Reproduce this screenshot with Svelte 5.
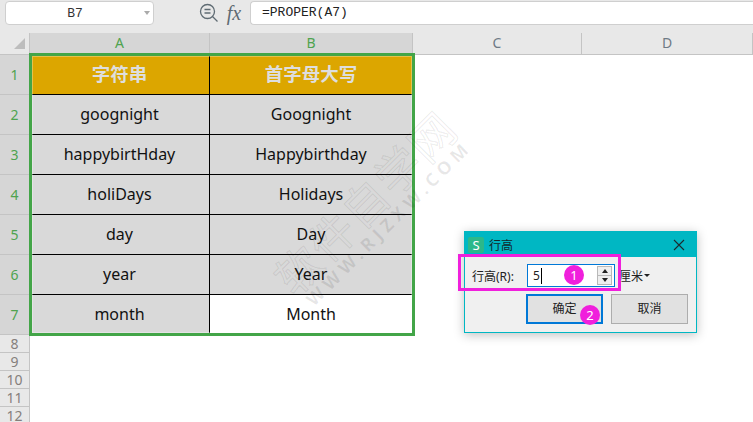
<script>
    const cols = ["A", "B", "C", "D"];
    const rows = [
        ["goognight", "Goognight"],
        ["happybirtHday", "Happybirthday"],
        ["holiDays", "Holidays"],
        ["day", "Day"],
        ["year", "Year"],
        ["month", "Month"],
    ];
    const emptyRows = [8, 9, 10, 11, 12];
</script>

<div class="app">
    <div class="formula-bar">
        <div class="name-box">
            <span>B7</span>
            <i class="name-caret"></i>
        </div>
        <svg class="zoom-icon" width="20" height="20" viewBox="0 0 20 20" fill="none" stroke="#5f6b73" stroke-width="1.3">
            <circle cx="8.5" cy="8.5" r="7" />
            <path d="M5.5 6.5h6M5.5 10h6M13.5 13.5l5 5" />
        </svg>
        <span class="fx">fx</span>
        <div class="formula-input">=PROPER(A7)</div>
    </div>

    <div class="sheet">
        <div class="corner"><i></i></div>
        {#each cols as col, i}
            <div class="col-head" class:active={i < 2}>{col}</div>
        {/each}

        <div class="row-head active">1</div>
        <div class="cell title">字符串</div>
        <div class="cell title">首字母大写</div>
        <div class="blank wide"></div>

        {#each rows as row, i}
            <div class="row-head active">{i + 2}</div>
            <div class="cell">{row[0]}</div>
            <div class="cell" class:white={i == 5}>{row[1]}</div>
            <div class="blank wide"></div>
        {/each}

        {#each emptyRows as n}
            <div class="row-head small">{n}</div>
            <div class="blank full"></div>
        {/each}

        <div class="selection"></div>
    </div>

    <div class="watermark">
        <span class="wm-big">软件自学网</span>
        <span class="wm-small">WWW.RJZXW.COM</span>
    </div>

    <div class="dialog">
        <div class="dialog-title">
            <span class="logo">S</span>
            <span class="dialog-name">行高</span>
            <svg class="close" width="12" height="12" viewBox="0 0 12 12" stroke="#1b2b2e" stroke-width="1.1">
                <path d="M1 1l10 10M11 1L1 11" />
            </svg>
        </div>
        <div class="dialog-body">
            <div class="field-row">
                <span class="field-label">行高(R):</span>
                <div class="field-input">
                    <span class="value">5</span>
                    <div class="spinner">
                        <i class="up"></i>
                        <i class="down"></i>
                    </div>
                </div>
                <span class="unit">厘米</span>
                <i class="unit-caret"></i>
            </div>
            <div class="button-row">
                <div class="btn primary">确定</div>
                <div class="btn">取消</div>
            </div>
        </div>
        <div class="highlight"></div>
        <div class="badge one">1</div>
        <div class="badge two">2</div>
    </div>
</div>

<style>
    :global(body) {
        margin: 0;
        background: #fff;
    }
    * {
        box-sizing: border-box;
    }
    .app {
        position: relative;
        width: 753px;
        height: 422px;
        overflow: hidden;
        font-family: "Noto Sans", "Noto Sans CJK SC", sans-serif;
    }
    .formula-bar {
        display: flex;
        align-items: center;
        height: 33px;
        padding: 1px 0 8px 5px;
        background: #e8e8e8;
    }
    .name-box {
        display: flex;
        align-items: center;
        width: 149px;
        height: 24px;
        background: #fff;
        border: 1px solid #cfcfcf;
        border-radius: 4px;
    }
    .name-box span {
        flex: 1;
        text-align: center;
        font: 13px "Liberation Mono", monospace;
        color: #333;
    }
    .name-caret {
        width: 0;
        height: 0;
        margin-right: 3px;
        border: 3px solid transparent;
        border-top: 4px solid #aaa;
        border-bottom: 0;
    }
    .zoom-icon {
        margin-left: 45px;
    }
    .fx {
        width: 26px;
        margin-left: 2px;
        font: italic 20px "Liberation Serif", serif;
        color: #5f6b73;
        text-align: center;
    }
    .formula-input {
        flex: 1;
        height: 24px;
        margin-left: 3px;
        padding: 3px 0 0 11px;
        background: #fff;
        border: 1px solid #cfcfcf;
        border-right: 0;
        border-radius: 4px 0 0 4px;
        font: 13px "Liberation Mono", monospace;
        color: #222;
    }
    .sheet {
        position: relative;
        display: grid;
        grid-template-columns: 30px 180px 203px 169px 171px;
        grid-template-rows: 22px repeat(7, 40px) repeat(5, 18px);
    }
    .corner {
        position: relative;
        background: #e8e8e8;
        border-right: 1px solid #c4c4c4;
        border-bottom: 1px solid #c4c4c4;
    }
    .corner i {
        position: absolute;
        right: 4px;
        bottom: 5px;
        border-left: 11px solid transparent;
        border-bottom: 11px solid #bdbdbd;
    }
    .col-head {
        background: #e8e8e8;
        border-right: 1px solid #c4c4c4;
        border-bottom: 1px solid #c4c4c4;
        text-align: center;
        font: 14px/20px "Noto Sans", sans-serif;
        color: #6e7a85;
    }
    .col-head.active {
        background: #d6d6d6;
        color: #4fa34f;
    }
    .row-head {
        background: #e8e8e8;
        border-right: 1px solid #c4c4c4;
        border-bottom: 1px solid #c4c4c4;
        text-align: center;
        font: 14px/39px "Noto Sans", sans-serif;
    }
    .row-head.small {
        font-size: 14px;
        line-height: 17px;
        color: #857f7c;
    }
    .row-head.active {
        background: #d6d6d6;
        color: #4fa34f;
    }
    .cell {
        background: #d9d9d9;
        border-right: 1px solid #000;
        border-bottom: 1px solid #000;
        text-align: center;
        font-size: 16px;
        line-height: 38px;
        color: #111;
    }
    .cell.title {
        background: #dca600;
        color: #dedede;
        font-size: 18.5px;
        font-weight: 700;
    }
    .cell.white {
        background: #fff;
    }
    .blank {
        background: #fff;
    }
    .wide {
        grid-column: 4 / span 2;
    }
    .full {
        grid-column: 2 / span 4;
    }
    .selection {
        position: absolute;
        left: 29px;
        top: 20px;
        width: 386px;
        height: 283px;
        border: 3px solid #43a548;
        box-shadow: inset 0 0 0 1px rgba(255, 255, 255, 0.3);
        pointer-events: none;
    }
    .watermark {
        position: absolute;
        left: 373px;
        top: 210px;
        display: flex;
        flex-direction: column;
        align-items: center;
        transform: translate(-50%, -50%) rotate(-45deg);
        color: rgba(0, 0, 0, 0.02);
        -webkit-text-stroke: 1.2px rgba(0, 0, 0, 0.08);
        pointer-events: none;
    }
    .wm-big {
        font-size: 45px;
        line-height: 40px;
        letter-spacing: 2px;
        font-weight: 400;
        white-space: nowrap;
    }
    .wm-small {
        font-size: 18px;
        line-height: 20px;
        font-weight: 700;
        letter-spacing: 5px;
        margin-left: 4px;
        white-space: nowrap;
        color: rgba(0, 0, 0, 0.09);
        -webkit-text-stroke: 0;
    }
    .dialog {
        position: absolute;
        left: 464px;
        top: 231px;
        width: 233px;
        height: 102px;
        background: #f0f0f0;
        border: 1px solid #00b7c3;
        box-shadow: 0 2px 10px rgba(0, 0, 0, 0.25);
        font-size: 12px;
        color: #222;
    }
    .dialog-title {
        display: flex;
        align-items: center;
        height: 25px;
        padding: 0 11px 0 3px;
        background: #00b7c3;
    }
    .logo {
        width: 16px;
        height: 16px;
        background: #2bb88a;
        border-radius: 2px;
        color: #fff;
        text-align: center;
        font: 400 13px/16px "Noto Sans", sans-serif;
    }
    .dialog-name {
        flex: 1;
        margin-left: 5px;
        font-size: 12px;
        color: #12282b;
    }
    .dialog-body {
        padding: 7px 8px 0 7px;
    }
    .field-row {
        display: flex;
        align-items: center;
        height: 23px;
    }
    .field-label {
        width: 55px;
        white-space: nowrap;
    }
    .field-input {
        display: flex;
        align-items: center;
        justify-content: space-between;
        width: 88px;
        height: 23px;
        padding: 0 1px 0 5px;
        background: #fff;
        border: 1px solid #0078d7;
    }
    .value {
        padding-right: 1px;
        border-right: 1px solid #000;
        line-height: 16px;
    }
    .spinner {
        display: flex;
        flex-direction: column;
        width: 15px;
        height: 19px;
        margin-right: 1px;
        background: #efefef;
        border: 1px solid #b9b9b9;
    }
    .spinner i {
        flex: 1;
        display: flex;
        justify-content: center;
        align-items: center;
    }
    .spinner .up::before {
        content: "";
        border: 3px solid transparent;
        border-top: 0;
        border-bottom: 4px solid #222;
    }
    .spinner .down {
        border-top: 1px solid #b9b9b9;
    }
    .spinner .down::before {
        content: "";
        border: 3px solid transparent;
        border-bottom: 0;
        border-top: 4px solid #222;
    }
    .unit {
        margin-left: 4px;
    }
    .unit-caret {
        margin-left: 1px;
        border: 3px solid transparent;
        border-bottom: 0;
        border-top: 3px solid #222;
    }
    .button-row {
        display: flex;
        gap: 8px;
        margin: 7px 0 0 54px;
    }
    .btn {
        width: 77px;
        height: 30px;
        background: #e1e1e1;
        border: 1px solid #adadad;
        text-align: center;
        line-height: 27px;
    }
    .btn.primary {
        border: 2px solid #0078d7;
        line-height: 26px;
    }
    .highlight {
        position: absolute;
        left: -7px;
        top: 22px;
        width: 163px;
        height: 37px;
        border: 3px solid #f01fdc;
    }
    .badge {
        position: absolute;
        width: 20px;
        height: 20px;
        border-radius: 50%;
        background: #f01fdc;
        color: #fff;
        text-align: center;
        font-size: 13px;
        line-height: 20px;
    }
    .badge.one {
        left: 99px;
        top: 33px;
    }
    .badge.two {
        left: 115px;
        top: 73px;
    }
</style>
